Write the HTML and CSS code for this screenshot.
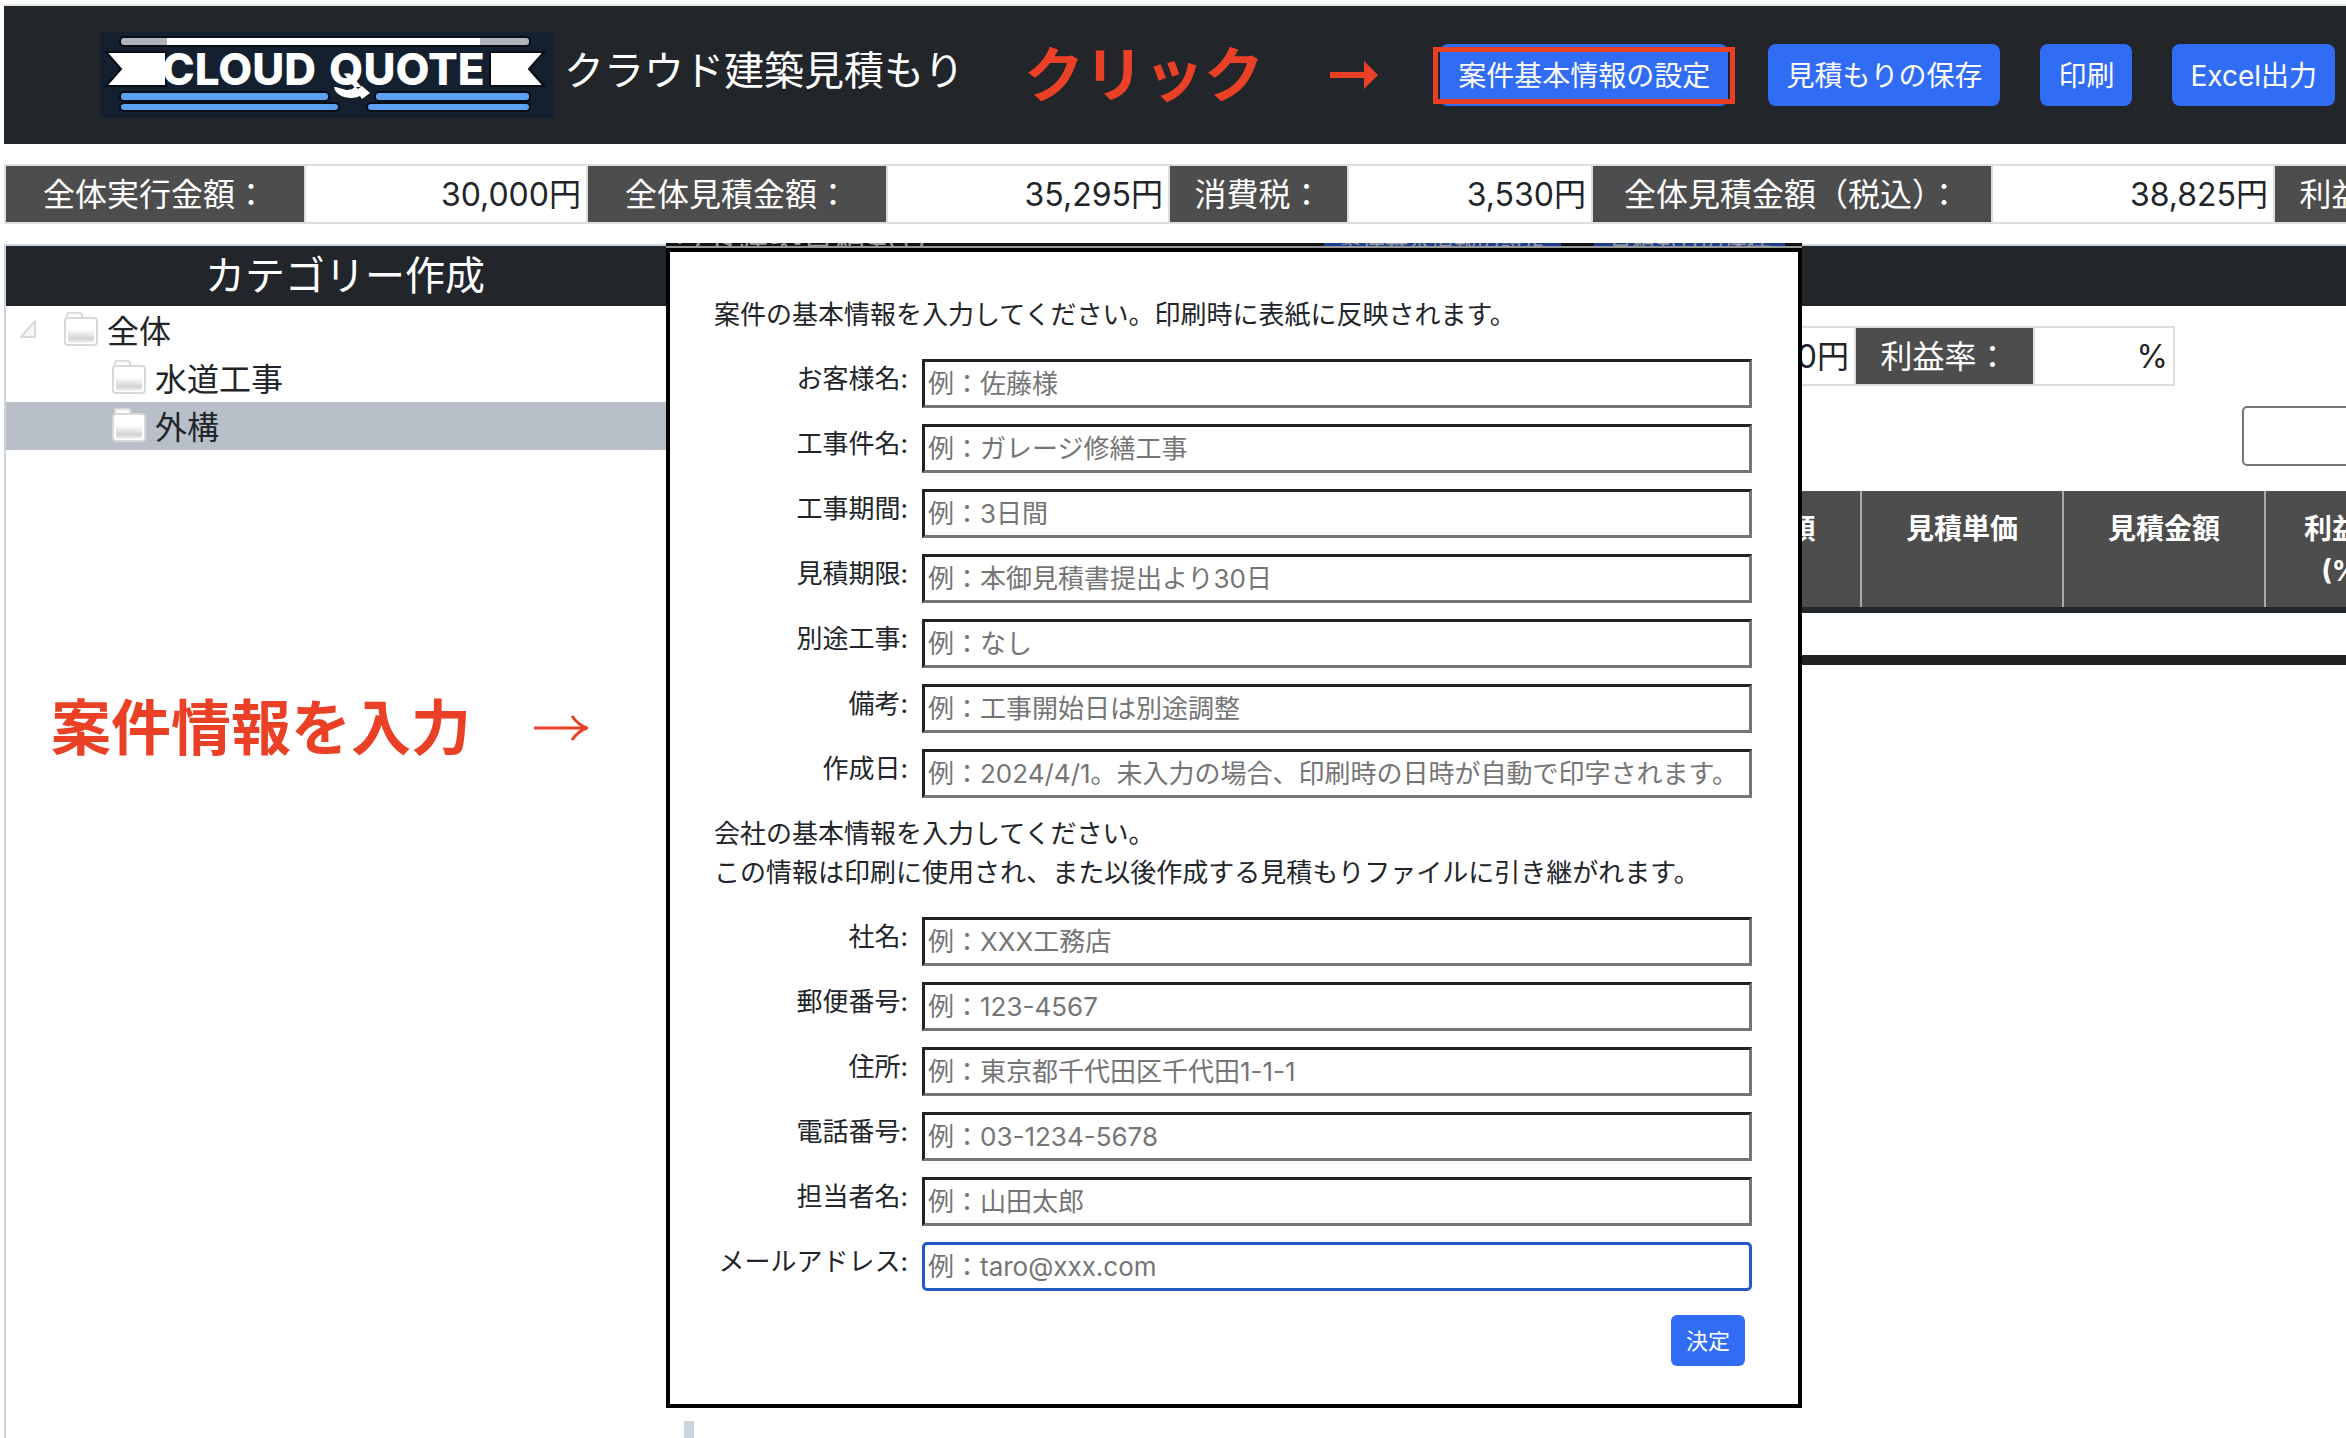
FILE: index.html
```html
<!DOCTYPE html>
<html lang="ja">
<head>
<meta charset="utf-8">
<meta name="viewport" content="width=device-width, initial-scale=1">
<title>クラウド建築見積もり</title>
<link rel="stylesheet" href="styles.css">
</head>
<body>
<svg class="defs" aria-hidden="true">
  <defs>
    <linearGradient id="folder-fill" x1="0" y1="0" x2="0" y2="1">
      <stop offset="0.4" stop-color="#fff"/>
      <stop offset="0.8" stop-color="#d2d2d2"/>
      <stop offset="1" stop-color="#f4f4f4"/>
    </linearGradient>
    <symbol id="folder" viewBox="0 0 34 34">
      <rect x="3" y="1" width="15" height="6" rx="2" fill="#fff" stroke="#dcdcdc" stroke-width="2"/>
      <rect x="1" y="6" width="32" height="27" rx="3" fill="#fff" stroke="#d8d8d8" stroke-width="2"/>
      <rect x="4" y="9" width="26" height="22" rx="3" fill="url(#folder-fill)"/>
    </symbol>
  </defs>
</svg>

<header class="header">
  <a class="brand" href="#">
    <svg class="logo" viewBox="0 0 454 86" role="img" aria-label="CLOUD QUOTE">
      <rect width="454" height="86" fill="#14202f"/>
      <g stroke="#080d16" stroke-width="2">
        <rect x="20" y="5" width="410" height="9" rx="4" fill="#b0b4ba"/>
        <path d="M67 6h313v7H67z" fill="#fff" stroke="none"/>
        <path d="M6 20h60v34H6l15-17zM444 20h-54v34h54l-15-17z" fill="#fff"/>
        <rect x="20" y="60" width="209" height="9" rx="4" fill="#5ba0f2"/>
        <rect x="275" y="60" width="155" height="9" rx="4" fill="#5ba0f2"/>
        <rect x="20" y="71" width="219" height="8" rx="4" fill="#5ba0f2"/>
        <rect x="267" y="71" width="163" height="8" rx="4" fill="#5ba0f2"/>
      </g>
      <g class="logo-text">
        <text x="62" y="53">CLOUD</text>
        <text x="229" y="53">QUOTE</text>
      </g>
      <path d="M234 55c4 0 8 2 12 3 4 0 8-1 9-4l3 3 4-3 8 7-8 6-2-3c-8 4-24 2-26-9z" fill="#fff"/>
    </svg>
    <span class="brand-name">クラウド建築見積もり</span>
  </a>
  <p class="note note-click">クリック
    <svg class="arrow" viewBox="0 0 48 28" aria-hidden="true"><path d="M0 11h34V0l14 14-14 14V17H0z" fill="#ea4025"/></svg>
  </p>
  <nav class="actions">
    <span class="callout"><button class="btn" type="button">案件基本情報の設定</button></span>
    <button class="btn" type="button">見積もりの保存</button>
    <button class="btn" type="button">印刷</button>
    <button class="btn" type="button">Excel出力</button>
  </nav>
</header>

<table class="totals">
  <tr>
    <th class="w-300">全体実行金額：</th><td class="w-282">30,000円</td>
    <th class="w-300">全体見積金額：</th><td class="w-282">35,295円</td>
    <th class="w-179">消費税：</th><td class="w-244">3,530円</td>
    <th class="w-400">全体見積金額（税込）：</th><td class="w-282">38,825円</td>
    <th class="w-179">利益率：</th>
  </tr>
</table>

<main class="workspace">
  <aside class="sidebar">
    <h2 class="panel-title">カテゴリー作成</h2>
    <ul class="tree">
      <li class="node">
        <svg class="toggle" viewBox="0 0 18 20" aria-hidden="true"><path d="M2 18 16 2v16z" fill="#f6f6f6" stroke="#d8d8d8" stroke-width="2" stroke-linejoin="round"/></svg>
        <svg class="folder" aria-hidden="true"><use href="#folder"/></svg>全体</li>
      <li class="node child"><svg class="folder" aria-hidden="true"><use href="#folder"/></svg>水道工事</li>
      <li class="node child selected"><svg class="folder" aria-hidden="true"><use href="#folder"/></svg>外構</li>
    </ul>
    <p class="note note-input">案件情報を入力
      <svg class="arrow-thin" viewBox="0 0 54 26" aria-hidden="true"><path d="M0 13h52M38 1c4 6 9 10 15 12-6 2-11 6-15 12" fill="none" stroke="#ea4025" stroke-width="3"/></svg>
    </p>
  </aside>
  <div class="splitter"></div>
  <section class="detail">
    <div class="panel-title"></div>
    <table class="totals subtotals">
      <tr><td class="w-244">0円</td><th class="w-179">利益率：</th><td class="w-140">%</td></tr>
    </table>
    <div class="search"><input class="search-box" type="text" aria-label="検索"></div>
    <table class="items">
      <thead>
        <tr><th>実行金額</th><th>見積単価</th><th>見積金額</th><th class="rate">利益率<br>(%)</th></tr>
      </thead>
    </table>
    <div class="items-end"></div>
  </section>

  <div class="dialog-layer">
    <div class="backdrop-strip" aria-hidden="true"><span class="strip-title">ウド建築見積もり</span><span class="strip-btn">案件基本情報の設定</span><span class="strip-btn">見積もりの保存</span></div>
    <form class="dialog">
      <p class="lead">案件の基本情報を入力してください。印刷時に表紙に反映されます。</p>
      <div class="row"><label for="customer">お客様名:</label><input id="customer" type="text" placeholder="例：佐藤様"></div>
      <div class="row"><label for="title">工事件名:</label><input id="title" type="text" placeholder="例：ガレージ修繕工事"></div>
      <div class="row"><label for="period">工事期間:</label><input id="period" type="text" placeholder="例：3日間"></div>
      <div class="row"><label for="limit">見積期限:</label><input id="limit" type="text" placeholder="例：本御見積書提出より30日"></div>
      <div class="row"><label for="extra">別途工事:</label><input id="extra" type="text" placeholder="例：なし"></div>
      <div class="row"><label for="remarks">備考:</label><input id="remarks" type="text" placeholder="例：工事開始日は別途調整"></div>
      <div class="row"><label for="date">作成日:</label><input id="date" type="text" placeholder="例：2024/4/1。未入力の場合、印刷時の日時が自動で印字されます。"></div>
      <p class="lead">会社の基本情報を入力してください。<br>この情報は印刷に使用され、また以後作成する見積もりファイルに引き継がれます。</p>
      <div class="row"><label for="company">社名:</label><input id="company" type="text" placeholder="例：XXX工務店"></div>
      <div class="row"><label for="zip">郵便番号:</label><input id="zip" type="text" placeholder="例：123-4567"></div>
      <div class="row"><label for="address">住所:</label><input id="address" type="text" placeholder="例：東京都千代田区千代田1-1-1"></div>
      <div class="row"><label for="tel">電話番号:</label><input id="tel" type="tel" placeholder="例：03-1234-5678"></div>
      <div class="row"><label for="person">担当者名:</label><input id="person" type="text" placeholder="例：山田太郎"></div>
      <div class="row"><label for="mail">メールアドレス:</label><input id="mail" class="active" type="email" placeholder="例：taro@xxx.com"></div>
      <div class="submit"><button class="btn btn-small" type="button">決定</button></div>
    </form>
  </div>
</main>
</body>
</html>
```
FILE: styles.css
```css
* { box-sizing: border-box; }

body {
  margin: 0;
  padding: 4px 0 0 4px;
  min-height: 100vh;
  display: flex;
  flex-direction: column;
  overflow: hidden;
  background: #fff;
  color: #212529;
  font-family: Inter, "Noto Sans CJK JP", sans-serif;
  font-size: 32px;
}

p, h2, ul { margin: 0; padding: 0; }
.defs { position: absolute; width: 0; height: 0; }

/* header */
.header {
  display: flex;
  align-items: center;
  height: 140px;
  padding: 0 11px 0 96px;
  border-top: 2px solid #dfe6e0;
  background: #22262b;
}
.brand {
  display: flex;
  align-items: center;
  gap: 10px;
  color: #fff;
  text-decoration: none;
  white-space: nowrap;
}
.logo { width: 454px; height: 86px; }
.logo-text {
  fill: #fff;
  font-family: Inter, sans-serif;
  font-weight: 800;
  font-size: 44px;
}
.brand-name { font-size: 40px; line-height: 60px; padding-bottom: 8px; }
.note {
  display: flex;
  align-items: center;
  color: #ea4025;
  font-size: 60px;
  font-weight: 700;
  line-height: 80px;
  white-space: nowrap;
}
.note-click { margin-left: 60px; gap: 66px; }
.arrow { width: 48px; height: 28px; }
.actions { display: flex; gap: 40px; margin-left: auto; }
.btn {
  height: 62px;
  padding: 0 18px 3px;
  border: 0;
  border-radius: 8px;
  background: #316cf4;
  color: #fff;
  font: inherit;
  font-size: 28px;
  white-space: nowrap;
}
.callout { position: relative; display: flex; }
.callout::after {
  content: "";
  position: absolute;
  inset: 3px -7px 2px;
  border: 5px solid #ea4025;
  pointer-events: none;
}

/* amount bars */
.totals {
  border-collapse: collapse;
  table-layout: fixed;
  width: max-content;
  margin-top: 20px;
  line-height: 44px;
}
.totals th, .totals td {
  height: 58px;
  padding: 2px 5px 0;
  border: 2px solid #ddd;
  font-weight: 400;
  white-space: nowrap;
}
.totals th { background: #4d4d4d; color: #fff; text-align: center; }
.totals td { text-align: right; }
.w-140 { width: 140px; }
.w-179 { width: 179px; }
.w-244 { width: 244px; }
.w-282 { width: 282px; }
.w-300 { width: 300px; }
.w-400 { width: 400px; }

/* workspace */
.workspace {
  position: relative;
  flex: 1;
  display: flex;
  margin-top: 20px;
  border-top: 2px solid #cbd5df;
  border-left: 2px solid #cbd5df;
}
.sidebar { flex: none; width: 678px; }
.splitter { flex: none; width: 10px; background: #cbd5df; }
.detail { flex: 1; min-width: 0; overflow: hidden; }
.panel-title {
  height: 60px;
  background: #22262b;
  color: #fff;
  font-size: 40px;
  font-weight: 400;
  line-height: 60px;
  text-align: center;
}
.tree { list-style: none; }
.node {
  display: flex;
  align-items: center;
  gap: 9px;
  height: 48px;
  padding: 0 0 3px 13px;
}
.toggle { width: 18px; height: 20px; margin-right: 18px; }
.child { padding-left: 106px; }
.selected { background: #b8bfc8; }
.folder { width: 34px; height: 34px; }
.note-input { margin: 238px 0 0 45px; gap: 63px; }
.arrow-thin { width: 54px; height: 26px; }

.subtotals { margin-left: 916px; }
.search { margin: 20px 0 0 1548px; }
.search-box {
  width: 360px;
  height: 60px;
  border: 2px solid #767676;
  border-radius: 5px;
  font: inherit;
}
.items {
  border-collapse: collapse;
  table-layout: fixed;
  width: 768px;
  margin: 25px 0 0 965px;
  border-bottom: 6px solid #22262b;
}
.items th {
  width: 202px;
  height: 119px;
  padding: 17px 0 0;
  border-right: 2px solid #aaa;
  background: #4d4d4d;
  color: #fff;
  font-size: 28px;
  line-height: 42px;
  vertical-align: top;
}
.items .rate { width: 162px; }
.items-end { height: 10px; margin-top: 42px; background: #222; }

/* dialog over the workspace */
.dialog-layer {
  position: absolute;
  top: -3px;
  left: 660px;
  width: 1136px;
  padding-bottom: 13px;
  background: #fff;
}
.backdrop-strip {
  display: flex;
  align-items: flex-end;
  gap: 33px;
  height: 5px;
  padding-left: 8px;
  border-bottom: 2px solid #999;
  background: #111;
  color: #999;
  font-size: 32px;
  line-height: 6px;
  white-space: nowrap;
  overflow: hidden;
}
.strip-title { flex: none; width: 617px; }
.strip-btn { flex: none; padding: 0 15px; background: #1d3f92; font-size: 23px; }
.dialog {
  padding: 43px 46px 38px 44px;
  border: 4px solid #000;
  font-size: 26px;
}
.lead { margin-bottom: 25px; line-height: 39px; white-space: nowrap; }
.row { display: flex; gap: 14px; margin-bottom: 16px; }
.row label { width: 194px; line-height: 39px; text-align: right; white-space: nowrap; }
.row input {
  flex: 1;
  min-width: 0;
  height: 49px;
  padding: 0 3px;
  border: 3px solid;
  border-color: #222 #767676 #767676 #222;
  background: #fff;
  font: inherit;
}
.row input::placeholder { color: #757575; opacity: 1; }
.row .active { border-color: #2259c4; border-radius: 5px; }
.submit { display: flex; justify-content: flex-end; margin: 24px 7px 0 0; }
.btn-small { height: 51px; padding: 0 15px 4px; border-radius: 6px; font-size: 22px; }
```
